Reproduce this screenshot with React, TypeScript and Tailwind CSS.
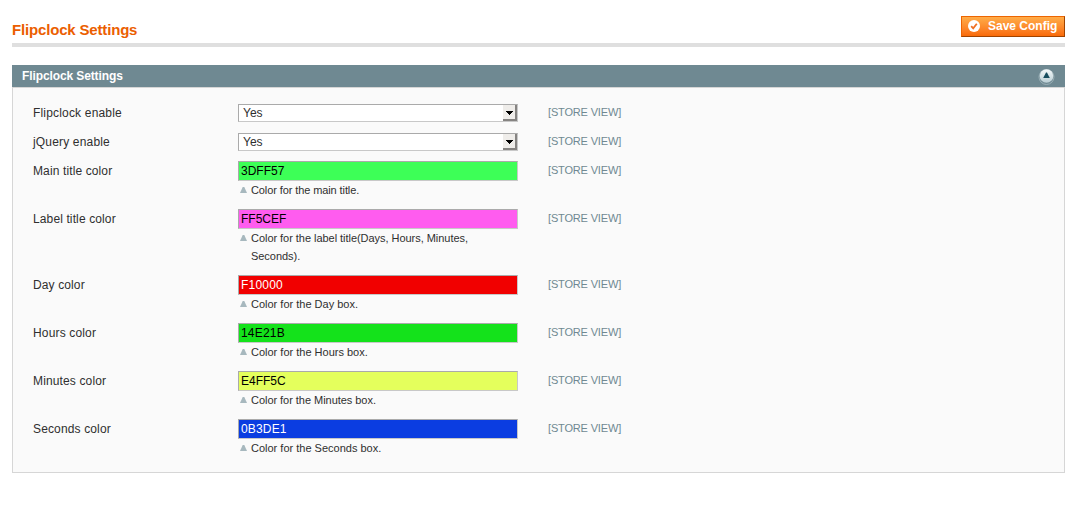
import React from "react";

type Field = {
  label: string;
  tracking: string;
  kind: "select" | "color";
  value: string;
  swatch?: string;
  note?: string;
  noteTracking?: string;
};

const fields: Field[] = [
  { label: "Flipclock enable", tracking: "tracking-[0.18px]", kind: "select", value: "Yes" },
  { label: "jQuery enable", tracking: "tracking-[0.17px]", kind: "select", value: "Yes" },
  { label: "Main title color", tracking: "tracking-[0.12px]", kind: "color", value: "3DFF57", swatch: "bg-[#3dff57] text-black", note: "Color for the main title.", noteTracking: "tracking-[-0.1px]" },
  { label: "Label title color", tracking: "tracking-[0.12px]", kind: "color", value: "FF5CEF", swatch: "bg-[#ff5cef] text-black", note: "Color for the label title(Days, Hours, Minutes, Seconds).", noteTracking: "tracking-[-0.04px]" },
  { label: "Day color", tracking: "tracking-[0.12px]", kind: "color", value: "F10000", swatch: "bg-[#f10000] text-white tracking-[0.2px]", note: "Color for the Day box." },
  { label: "Hours color", tracking: "tracking-[0.16px]", kind: "color", value: "14E21B", swatch: "bg-[#14e21b] text-black tracking-[0.2px]", note: "Color for the Hours box." },
  { label: "Minutes color", tracking: "tracking-[0.14px]", kind: "color", value: "E4FF5C", swatch: "bg-[#e4ff5c] text-black", note: "Color for the Minutes box.", noteTracking: "tracking-[-0.04px]" },
  { label: "Seconds color", tracking: "tracking-[0.14px]", kind: "color", value: "0B3DE1", swatch: "bg-[#0b3de1] text-white tracking-[0.16px]", note: "Color for the Seconds box." },
];

const boxBorder = "border border-t-[#aaaaaa] border-l-[#aaaaaa] border-r-[#c8c8c8] border-b-[#c8c8c8]";

function SelectBox({ value }: { value: string }) {
  return (
    <div className={`mt-px flex h-[18px] justify-between bg-white ${boxBorder}`}>
      <span className="pl-1 leading-4">{value}</span>
      <span className="flex h-4 w-3.5 justify-end border-r-2 border-b-2 border-r-[#868482] border-b-[#868482] bg-[#efedea] pt-1.5 pr-0.5">
        <svg className="shrink-0" width="7" height="4" viewBox="0 0 7 4" shapeRendering="crispEdges">
          <path d="M0 0h7v1H6v1H5v1H4v1H3V3H2V2H1V1H0z" fill="#000" />
        </svg>
      </span>
    </div>
  );
}

function Row({ field }: { field: Field }) {
  return (
    <div className="flex items-start">
      <div className={`h-[19px] w-[205px] shrink-0 pt-px leading-[19px] ${field.tracking}`}>{field.label}</div>
      <div className="w-[280px] shrink-0">
        {field.kind === "select" ? (
          <SelectBox value={field.value} />
        ) : (
          <div className={`h-5 pl-0.5 leading-[18px] ${boxBorder} ${field.swatch}`}>{field.value}</div>
        )}
        {field.note && (
          <div className="flex w-[250px] pl-0.5 text-[11px] leading-[18px]">
            <svg className="mt-1.5 mr-1 shrink-0" width="7" height="6" viewBox="0 0 7 6">
              <path d="M2.7 0h1.6L7 6H0z" fill="#a7b8be" />
            </svg>
            <p className={field.noteTracking}>{field.note}</p>
          </div>
        )}
      </div>
      <div className="ml-[30px] h-[19px] text-[11px] leading-[18px] tracking-[-0.16px] text-[#6f8992]">[STORE VIEW]</div>
    </div>
  );
}

export default function App() {
  return (
    <main className="h-[522px] bg-white px-3 pr-[13px] pt-4 font-['Liberation_Sans',Arial,sans-serif] text-[12px] text-[#2f2f2f]">
      <header className="flex h-[31px] items-start justify-between border-b-4 border-[#dfdfdf]">
        <h1 className="pt-1 text-[15px] leading-5 font-bold tracking-[-0.17px] text-[#eb5e00]">Flipclock Settings</h1>
        <button className="flex h-[21px] w-[104px] items-center border border-t-[#ed6502] border-r-[#a04300] border-b-[#a04300] border-l-[#ed6502] bg-linear-to-b from-[#ffac47] to-[#f96a06] pl-1.5 font-bold text-white">
          <svg className="mr-2 -mt-px shrink-0" width="12" height="12" viewBox="0 0 12 12">
            <circle cx="6" cy="6" r="6" fill="#fff" />
            <path d="M3.2 6.1l2 2.2 3.6-4.6" fill="none" stroke="#ef7024" strokeWidth="1.8" />
          </svg>
          <span className="leading-[15px] whitespace-nowrap">Save Config</span>
        </button>
      </header>
      <section className="mt-[18px]">
        <div className="flex h-[22px] items-center justify-between bg-[#6f8992] pr-2.5 pl-2.5">
          <h2 className="leading-[18px] font-bold tracking-[-0.11px] text-white">Flipclock Settings</h2>
          <svg width="17" height="17" viewBox="0 0 17 17">
            <defs>
              <linearGradient id="knob" x1="0" y1="0" x2="0" y2="1">
                <stop offset="0" stopColor="#f5fafb" />
                <stop offset="1" stopColor="#b9cdd3" />
              </linearGradient>
            </defs>
            <circle cx="8.5" cy="9" r="7.5" fill="#6f8992" stroke="#a5b9bf" strokeWidth=".8" />
            <circle cx="8.5" cy="8" r="6.8" fill="url(#knob)" />
            <path d="M8 4.5h1L11.8 10H5.2z" fill="#164d5e" />
          </svg>
        </div>
        <div className="flex h-[386px] flex-col gap-2.5 border border-[#d6d6d6] bg-[#fafafa] px-5 pt-[15px]">
          {fields.map((field) => (
            <Row key={field.label} field={field} />
          ))}
        </div>
      </section>
    </main>
  );
}
